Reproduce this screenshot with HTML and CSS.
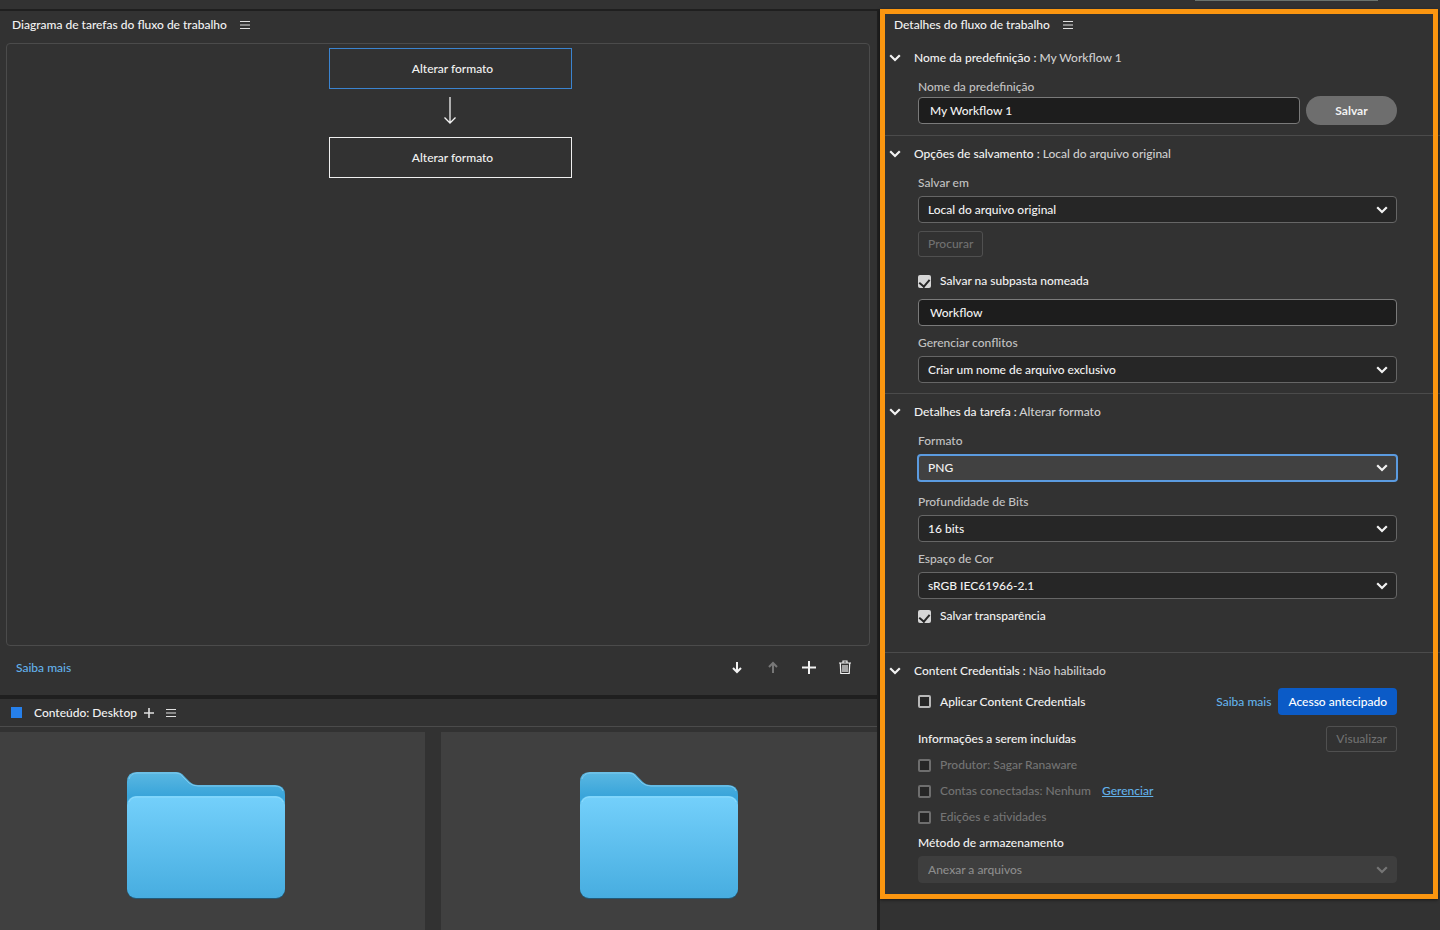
FILE: index.html
```html
<!DOCTYPE html>
<html lang="pt-BR">
<head>
    <meta charset="UTF-8">
    <meta name="viewport" content="width=device-width, initial-scale=1.0">
    <title>Construtor de fluxo de trabalho</title>
    <link rel="stylesheet" href="styles.css">
</head>
<body>
    <!-- Ícones compartilhados -->
    <svg class="sprite" aria-hidden="true">
        <symbol id="chevron" viewBox="0 0 12 8">
            <path d="M1.2 1.2 6 6l4.8-4.8" fill="none" stroke="currentColor" stroke-width="2.2"/>
        </symbol>
        <symbol id="menu" viewBox="0 0 10 10">
            <path d="M0 1.5h10M0 5h10M0 8.5h10" fill="none" stroke="currentColor" stroke-width="1.2"/>
        </symbol>
        <symbol id="folder" viewBox="0 0 160 130">
            <path d="M1 118V11Q1 1 11 1h39q5 0 8 4l6 6q3 3 8 3h77q10 0 10 10v94z" fill="url(#folder-back)"/>
            <path d="M3 8q2-6 8-6h39q5 0 7 4l6 6q4 3 9 3h77q6 0 8 5" fill="none" stroke="#7fc9ec"/>
            <rect x="1" y="26" width="158" height="102" rx="9" fill="#225a78"/>
            <rect x="1" y="25" width="158" height="102" rx="9" fill="url(#folder-front)"/>
            <path d="M3 31q2-5 8-5h138q6 0 8 5" fill="none" stroke="#8ddcfc"/>
        </symbol>
        <defs>
            <linearGradient id="folder-back" x1="0" y1="0" x2="0" y2="1">
                <stop offset="0" stop-color="#5bb8e2"/>
                <stop offset="0.2" stop-color="#3aa5da"/>
            </linearGradient>
            <linearGradient id="folder-front" x1="0" y1="0" x2="0" y2="1">
                <stop offset="0" stop-color="#74d0fb"/>
                <stop offset="1" stop-color="#47ade0"/>
            </linearGradient>
        </defs>
    </svg>

    <div class="app">
        <div class="topbar"><div class="topbar-search"></div></div>

        <main class="workspace">
            <div class="left-column">
                <section class="panel diagram">
                    <header class="panel-header">
                        <h2>Diagrama de tarefas do fluxo de trabalho</h2>
                        <button class="icon-btn" aria-label="Menu do diagrama"><svg class="icon-menu"><use href="#menu"/></svg></button>
                    </header>
                    <div class="canvas">
                        <button class="task selected">Alterar formato</button>
                        <svg class="task-arrow" viewBox="0 0 14 30">
                            <path d="M7 1v26M1.5 21.5 7 27l5.5-5.5" fill="none" stroke="currentColor" stroke-width="1.3"/>
                        </svg>
                        <button class="task">Alterar formato</button>
                    </div>
                    <footer class="diagram-footer">
                        <a href="#">Saiba mais</a>
                        <div class="tools">
                            <button class="tool" aria-label="Mover para baixo">
                                <svg viewBox="0 0 16 16"><path d="M8 2v10M4 8l4 4 4-4" fill="none" stroke="currentColor" stroke-width="2"/></svg>
                            </button>
                            <button class="tool" aria-label="Mover para cima" disabled>
                                <svg viewBox="0 0 16 16"><path d="M8 13V3M4 7l4-4 4 4" fill="none" stroke="currentColor" stroke-width="2"/></svg>
                            </button>
                            <button class="tool" aria-label="Adicionar tarefa">
                                <svg viewBox="0 0 16 16"><path d="M8 1v13M1 7.5h14" fill="none" stroke="currentColor" stroke-width="2"/></svg>
                            </button>
                            <button class="tool" aria-label="Excluir tarefa">
                                <svg viewBox="0 0 16 16"><path d="M2 3h12M6 3V1h4v2M3.3 3.5l.5 10h8.4l.5-10M6 5v7M8 5v7M10 5v7" fill="none" stroke="currentColor" stroke-width="1.2"/></svg>
                            </button>
                        </div>
                    </footer>
                </section>

                <section class="panel content">
                    <header class="content-header">
                        <span class="content-mark"></span>
                        <h2>Conteúdo: Desktop</h2>
                        <button class="icon-btn" aria-label="Novo painel de conteúdo">
                            <svg class="icon-plus" viewBox="0 0 10 10"><path d="M5 0v10M0 5h10" stroke="currentColor" stroke-width="1.6"/></svg>
                        </button>
                        <button class="icon-btn" aria-label="Menu de conteúdo"><svg class="icon-menu"><use href="#menu"/></svg></button>
                    </header>
                    <div class="tiles">
                        <div class="tile"><svg class="folder"><use href="#folder"/></svg></div>
                        <div class="tile"><svg class="folder"><use href="#folder"/></svg></div>
                    </div>
                </section>
            </div>

            <aside class="panel details-panel">
                <div class="highlight">
                    <header class="panel-header details-header">
                        <h2>Detalhes do fluxo de trabalho</h2>
                        <button class="icon-btn" aria-label="Menu de detalhes"><svg class="icon-menu"><use href="#menu"/></svg></button>
                    </header>

                    <details class="group group-preset" open>
                        <summary><svg class="chevron"><use href="#chevron"/></svg><span>Nome da predefinição : <em>My Workflow 1</em></span></summary>
                        <div class="fields">
                            <label class="field-label" for="preset">Nome da predefinição</label>
                            <div class="preset-row">
                                <input class="text-input" id="preset" type="text" value="My Workflow 1">
                                <button class="save-btn">Salvar</button>
                            </div>
                        </div>
                    </details>

                    <details class="group" open>
                        <summary><svg class="chevron"><use href="#chevron"/></svg><span>Opções de salvamento : <em>Local do arquivo original</em></span></summary>
                        <div class="fields">
                            <label class="field-label" for="location">Salvar em</label>
                            <div class="select">
                                <select id="location"><option>Local do arquivo original</option></select>
                                <svg class="chevron"><use href="#chevron"/></svg>
                            </div>
                            <button class="outline-btn browse-btn" disabled>Procurar</button>
                            <label class="check subfolder-check"><input type="checkbox" checked>Salvar na subpasta nomeada</label>
                            <input class="text-input" type="text" value="Workflow" aria-label="Nome da subpasta">
                            <label class="field-label next" for="conflicts">Gerenciar conflitos</label>
                            <div class="select">
                                <select id="conflicts"><option>Criar um nome de arquivo exclusivo</option></select>
                                <svg class="chevron"><use href="#chevron"/></svg>
                            </div>
                        </div>
                    </details>

                    <details class="group group-task" open>
                        <summary><svg class="chevron"><use href="#chevron"/></svg><span>Detalhes da tarefa : <em>Alterar formato</em></span></summary>
                        <div class="fields">
                            <label class="field-label" for="format">Formato</label>
                            <div class="select active">
                                <select id="format"><option>PNG</option></select>
                                <svg class="chevron"><use href="#chevron"/></svg>
                            </div>
                            <label class="field-label next" for="depth">Profundidade de Bits</label>
                            <div class="select">
                                <select id="depth"><option>16 bits</option></select>
                                <svg class="chevron"><use href="#chevron"/></svg>
                            </div>
                            <label class="field-label next" for="space">Espaço de Cor</label>
                            <div class="select">
                                <select id="space"><option>sRGB IEC61966-2.1</option></select>
                                <svg class="chevron"><use href="#chevron"/></svg>
                            </div>
                            <label class="check transparency-check"><input type="checkbox" checked>Salvar transparência</label>
                        </div>
                    </details>

                    <details class="group group-credentials" open>
                        <summary><svg class="chevron"><use href="#chevron"/></svg><span>Content Credentials : <em>Não habilitado</em></span></summary>
                        <div class="fields">
                            <div class="row">
                                <label class="check"><input type="checkbox">Aplicar Content Credentials</label>
                                <div class="row-end">
                                    <a href="#">Saiba mais</a>
                                    <button class="primary-btn">Acesso antecipado</button>
                                </div>
                            </div>
                            <div class="row row-info">
                                <h3>Informações a serem incluídas</h3>
                                <button class="outline-btn" disabled>Visualizar</button>
                            </div>
                            <div class="option"><label class="check"><input type="checkbox" disabled>Produtor: Sagar Ranaware</label></div>
                            <div class="option"><label class="check"><input type="checkbox" disabled>Contas conectadas: Nenhum</label><a class="underlined" href="#">Gerenciar</a></div>
                            <div class="option"><label class="check"><input type="checkbox" disabled>Edições e atividades</label></div>
                            <label class="field-label storage-label" for="storage">Método de armazenamento</label>
                            <div class="select">
                                <select id="storage" disabled><option>Anexar a arquivos</option></select>
                                <svg class="chevron"><use href="#chevron"/></svg>
                            </div>
                        </div>
                    </details>
                </div>
            </aside>
        </main>
    </div>
</body>
</html>
```
FILE: styles.css
```css
* {
    margin: 0;
    padding: 0;
    box-sizing: border-box;
}

body {
    font-family: Lato, 'Open Sans', sans-serif;
    font-size: 12px;
    font-weight: 500;
    line-height: 18px;
    background: #1f1f1f;
    color: #f2f2f2;
}

button,
input,
select {
    font: inherit;
    color: inherit;
}

button {
    background: none;
    border: none;
    cursor: pointer;
}

h2,
h3 {
    font-size: 12px;
    font-weight: 500;
}

a {
    color: #62b1ea;
    text-decoration: none;
}

svg {
    display: block;
    flex: none;
}

.sprite {
    position: absolute;
    width: 0;
    height: 0;
}

.app {
    min-height: 100vh;
    display: flex;
    flex-direction: column;
}

.topbar {
    height: 9px;
    padding-right: 62px;
    background: #323232;
}

.topbar-search {
    width: 183px;
    height: 1px;
    margin-left: auto;
    background: #6a736e;
}

.workspace {
    flex: 1;
    display: grid;
    grid-template-columns: minmax(0, 1fr) 560px;
    gap: 3px;
}

.left-column {
    display: flex;
    flex-direction: column;
    gap: 4px;
    padding-top: 2px;
}

.panel {
    background: #323232;
}

.panel-header {
    display: flex;
    align-items: center;
    gap: 13px;
    height: 32px;
    padding: 0 12px 4px;
}

.icon-btn {
    color: #e0e0e0;
}

.icon-menu,
.icon-plus {
    width: 10px;
    height: 10px;
}

/* Diagrama */
.diagram {
    flex: 1;
    display: flex;
    flex-direction: column;
}

.canvas {
    flex: 1;
    margin: 0 7px 0 6px;
    padding: 4px 0 4px 24px;
    border: 1px solid #4b4b4b;
    border-radius: 4px;
    display: flex;
    flex-direction: column;
    align-items: center;
}

.task {
    width: 243px;
    height: 41px;
    padding-left: 5px;
    border: 1px solid #f0f0f0;
}

.task.selected {
    border-color: #3b84d0;
}

.task-arrow {
    width: 14px;
    height: 30px;
    margin: 7px 0 11px;
}

.diagram-footer {
    height: 49px;
    padding: 0 24px 5px 16px;
    display: flex;
    align-items: center;
    justify-content: space-between;
}

.tools {
    display: flex;
    gap: 20px;
}

.tool svg {
    width: 16px;
    height: 16px;
}

.tool:disabled {
    color: #777;
}

/* Conteúdo */
.content-header {
    display: flex;
    align-items: center;
    gap: 12px;
    height: 28px;
    padding: 0 11px;
    border-bottom: 1px solid #4b4b4b;
}

.content-header h2 {
    margin-right: -5px;
}

.content-mark {
    width: 11px;
    height: 11px;
    background: #2680eb;
}

.tiles {
    display: grid;
    grid-template-columns: 1fr 1fr;
    gap: 16px;
    margin-left: -12px;
    padding-top: 5px;
}

.tile {
    height: 198px;
    padding-top: 39px;
    background: #404040;
}

.folder {
    width: 160px;
    height: 130px;
    margin: 0 auto;
}

/* Detalhes */
.highlight {
    position: relative;
    padding-bottom: 16px;
}

.highlight::after {
    content: '';
    position: absolute;
    inset: 0 2px 0 0;
    border: 5px solid #fb9610;
    box-shadow: 0 1px 3px rgba(0, 0, 0, 0.5);
    pointer-events: none;
}

.details-header {
    height: 31px;
    padding: 1px 14px 0;
}

.group {
    padding: 8px 43px 10px 0;
    border-top: 1px solid #4b4b4b;
}

.group-preset {
    border-top: none;
}

.group-task {
    padding-bottom: 27px;
}

.group-credentials {
    padding-bottom: 0;
}

summary {
    display: flex;
    align-items: center;
    gap: 13px;
    height: 20px;
    padding-left: 9px;
    margin-bottom: 10px;
    list-style: none;
    cursor: pointer;
}

summary em {
    font-style: normal;
    color: #cfcfcf;
}

.chevron {
    width: 12px;
    height: 8px;
}

.fields {
    padding-left: 38px;
}

.field-label {
    display: block;
    margin-bottom: 4px;
    color: #c2c2c2;
}

.field-label.next {
    margin-top: 8px;
}

.group-preset .field-label {
    margin-bottom: 0;
}

.preset-row {
    display: flex;
    align-items: center;
    gap: 6px;
}

.text-input {
    display: block;
    width: 100%;
    height: 27px;
    padding: 0 11px;
    background: #1d1d1d;
    border: 1px solid #7a7a7a;
    border-radius: 4px;
}

.save-btn {
    flex: none;
    width: 91px;
    height: 29px;
    border-radius: 15px;
    background: #6e6e6e;
    font-weight: 700;
}

.select {
    position: relative;
}

.select select {
    display: block;
    width: 100%;
    height: 27px;
    padding: 0 30px 0 9px;
    appearance: none;
    background: #262626;
    border: 1px solid #666;
    border-radius: 4px;
}

.select .chevron {
    position: absolute;
    top: 10px;
    right: 9px;
    pointer-events: none;
}

.select.active {
    margin: 0 -1px 11px;
}

.select.active select {
    height: 28px;
    background: #414141;
    border: 2px solid #5b9be0;
}

.select.active .chevron {
    right: 10px;
}

.select select:disabled {
    background: #3e3e3e;
    border-color: #3e3e3e;
    color: #8c8c8c;
    opacity: 1;
}

.select select:disabled + .chevron {
    color: #757575;
}

.outline-btn {
    height: 26px;
    padding: 0 9px;
    border: 1px solid #505050;
    border-radius: 3px;
}

.outline-btn:disabled {
    color: #707070;
}

.browse-btn {
    display: block;
    margin-top: 8px;
}

.check {
    display: flex;
    align-items: center;
    gap: 9px;
}

.check input {
    appearance: none;
    width: 13px;
    height: 13px;
    border: 2px solid #b8b8b8;
    border-radius: 2px;
    background: #262626;
}

.check input:checked {
    display: grid;
    justify-content: center;
    padding-top: 2px;
    border: none;
    background: #d6d6d6;
}

.check input:checked::before {
    content: '';
    width: 5px;
    height: 8px;
    border: solid #262626;
    border-width: 0 2px 2px 0;
    transform: rotate(40deg);
}

.check input:disabled {
    border-color: #6e6e6e;
}

.check:has(input:disabled) {
    color: #747474;
}

.subfolder-check {
    margin: 15px 0 9px;
}

.transparency-check {
    margin-top: 8px;
}

.group-credentials summary {
    margin-bottom: 7px;
}

.row {
    display: flex;
    align-items: center;
    justify-content: space-between;
}

.row-end {
    display: flex;
    align-items: center;
    gap: 7px;
}

.primary-btn {
    height: 27px;
    padding: 0 10px;
    border-radius: 4px;
    background: #0b5bc7;
    color: #fff;
}

.row-info {
    margin-top: 11px;
}

.option {
    display: flex;
    align-items: center;
    gap: 11px;
    height: 26px;
}

.underlined {
    text-decoration: underline;
}

.storage-label {
    margin-top: 4px;
    color: #f2f2f2;
}
```
